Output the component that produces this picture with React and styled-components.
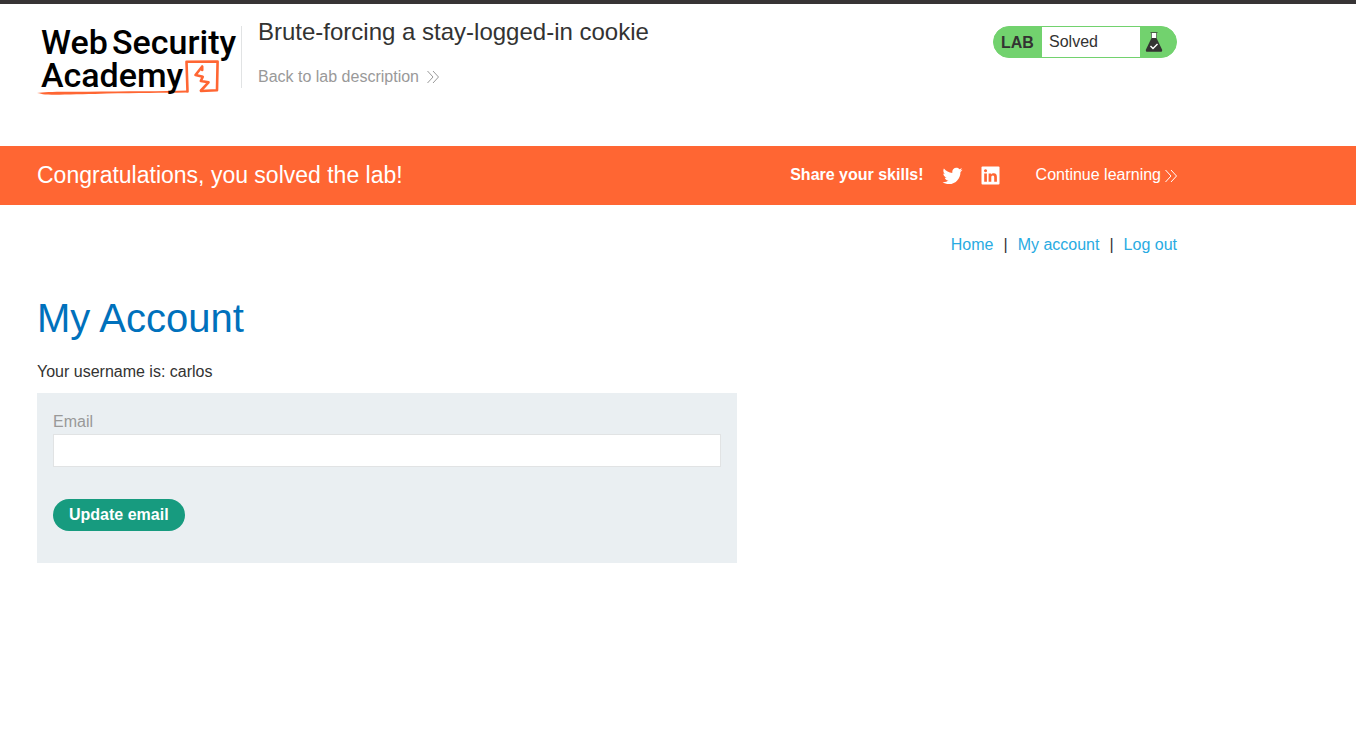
import React from "react";
import styled, { createGlobalStyle } from "styled-components";

const GlobalStyle = createGlobalStyle`
  *, *::before, *::after { box-sizing: border-box; }
  body {
    margin: 0;
    background: #fff;
    color: #333332;
    font-family: "Liberation Sans", Arial, sans-serif;
    font-size: 16px;
    line-height: 24px;
  }
  a { color: inherit; text-decoration: none; }
`;

const Page = styled.div`
  border-top: 4px solid #373435;
`;

const Container = styled.div`
  max-width: 1177px;
  padding-left: 37px;
`;

const HeaderRow = styled(Container)`
  display: flex;
  align-items: flex-start;
  min-height: 142px;
  padding-top: 22px;
`;

const LogoLink = styled.a`
  display: block;
  flex: none;
  width: 204px;
  height: 72px;
`;

const LogoSvg = styled.svg`
  display: block;
  overflow: visible;
  font-family: Roboto, sans-serif;
  font-weight: 500;
  font-size: 34px;
`;

const TitleBlock = styled.div`
  flex: 1;
  height: 62px;
  padding-left: 16px;
  border-left: 1px solid #e1e3e4;
`;

const LabTitle = styled.h2`
  margin: -6px 0 21px;
  font-size: 24px;
  font-weight: 400;
  line-height: 24px;
`;

const ChevronLink = styled.a`
  display: inline-flex;
  align-items: center;
  gap: ${(p) => p.$gap}px;
  color: ${(p) => p.$color};
`;

const Status = styled.div`
  display: flex;
  align-items: center;
  flex: none;
  width: 184px;
  height: 32px;
  overflow: hidden;
  border: 1px solid #72d26e;
  border-radius: 16px;
  background: #72d26e;
`;

const StatusTag = styled.span`
  width: 48px;
  padding: 2px 0 0 7px;
  font-weight: 700;
`;

const StatusText = styled.span`
  flex: 1;
  height: 30px;
  padding-left: 7px;
  background: #fff;
  line-height: 30px;
`;

const FlaskBox = styled.span`
  display: flex;
  align-items: center;
  width: 36px;
  padding-left: 5px;
`;

const Banner = styled.section`
  background: #ff6633;
  color: #fff;
`;

const BannerRow = styled(Container)`
  display: flex;
  align-items: center;
  min-height: 59px;
`;

const BannerTitle = styled.h4`
  flex: 1;
  margin: 0;
  padding-bottom: 2px;
  font-size: 23px;
  font-weight: 400;
`;

const BannerText = styled.span`
  padding-bottom: 2px;
`;

const Share = styled.div`
  display: flex;
  align-items: center;
  gap: 18px;
  margin-right: 36px;
  font-weight: 700;
`;

const IconLink = styled.a`
  display: flex;
`;

const Nav = styled.nav`
  display: flex;
  justify-content: flex-end;
  gap: 10px;
  padding-top: 28px;
`;

const NavLink = styled.a`
  color: #29abe2;
`;

const Heading = styled.h1`
  margin: 37px 0 18px;
  color: #0071bc;
  font-size: 40px;
  font-weight: 400;
  line-height: 48px;
`;

const Username = styled.p`
  margin: 0 0 9px;
`;

const Form = styled.form`
  max-width: 700px;
  padding: 17px 16px 32px;
  background: #eaeff2;
`;

const Label = styled.label`
  display: block;
  color: #999;
`;

const Input = styled.input`
  display: block;
  width: 100%;
  height: 33px;
  padding: 0 8px;
  border: 1px solid #e1e3e4;
  border-radius: 0;
  background: #fff;
  color: inherit;
  font: inherit;
`;

const Button = styled.button`
  display: block;
  height: 32px;
  margin-top: 32px;
  padding: 0 16px;
  border: 0;
  border-radius: 16px;
  background: #179b7f;
  color: #fff;
  font-family: inherit;
  font-size: 16px;
  font-weight: 700;
`;

function Logo() {
  return (
    <LogoSvg width="204" height="72" viewBox="0 0 204 72" role="img" aria-label="Web Security Academy">
      <text x="4" y="28">Web</text>
      <text x="75" y="28">Security</text>
      <path
        d="M0 67 C8 65.5 25 65.6 50 65.8 C90 65.2 125 65.8 151 64.6 L150 66.6 C125 67 100 67 70 67.6 C48 68.4 22 69 8 68.4 C5 68.2 3 67.4 0 67Z"
        fill="#ff6633"
      />
      <g fill="none" stroke="#ff6633" strokeLinejoin="round" strokeLinecap="round">
        <path strokeWidth="2.6" d="M150.500 65.500 L149.500 35.800 L180.600 35.600 L180 64.200 L164 65" />
        <path strokeWidth="2.6" d="M164 64.500 L171.500 56.300 L163.800 55 L165.800 50.800 L158.500 49 L165.200 40.500 V44" />
      </g>
      <text x="4" y="61">Academy</text>
    </LogoSvg>
  );
}

function Chevrons() {
  return (
    <svg width="12" height="14" viewBox="0 0 12 14" fill="none" stroke="currentColor" aria-hidden="true">
      <path d="M0.500 1 L6 7 L0.500 13 M6 1 L11.500 7 L6 13" />
    </svg>
  );
}

function Flask() {
  return (
    <svg width="18" height="20" viewBox="0 0 18 20" aria-hidden="true">
      <path d="M6.500 1 H11.500 V6.500 H6.500Z" fill="#fff" />
      <path d="M5.500 0.500 H12.500" stroke="#333332" strokeOpacity="0.7" />
      <path
        d="M6.500 6 H11.500 L17 17.500 C17.500 19 17 19.800 15.600 19.800 H2.400 C1 19.800 0.500 19 1 17.500Z"
        fill="#333332"
      />
      <path d="M6.500 1 V6 M11.500 1 V6" stroke="#333332" strokeOpacity="0.6" />
      <path d="M5.500 14 L8 16.500 L12.500 12" fill="none" stroke="#fff" strokeWidth="1.400" />
    </svg>
  );
}

function Twitter() {
  return (
    <svg width="21" height="21" viewBox="1 1 22 22" fill="currentColor" aria-hidden="true">
      <path d="M22.460 6c-.770.350-1.600.580-2.460.690.880-.530 1.560-1.370 1.880-2.380-.830.500-1.750.850-2.720 1.050C18.370 4.500 17.260 4 16 4c-2.350 0-4.270 1.920-4.270 4.290 0 .340.040.670.110.980C8.280 9.090 5.110 7.380 3 4.790c-.370.630-.580 1.370-.580 2.150 0 1.490.750 2.810 1.910 3.560-.710 0-1.370-.200-1.950-.500v.030c0 2.080 1.480 3.820 3.440 4.210a4.220 4.220 0 0 1-1.930.070 4.280 4.280 0 0 0 4 2.980 8.521 8.521 0 0 1-5.330 1.840c-.340 0-.680-.020-1.020-.060C3.440 20.290 5.700 21 8.120 21 16 21 20.330 14.460 20.330 8.790c0-.190 0-.370-.010-.560.840-.600 1.560-1.360 2.140-2.230z" />
    </svg>
  );
}

function LinkedIn() {
  return (
    <svg width="19" height="19" viewBox="0 0 19 19" aria-hidden="true">
      <rect x="0.500" y="0.500" width="18" height="18" rx="1" fill="#fff" />
      <path
        d="M3.200 7.400 H5.900 V15.800 H3.200Z M4.550 3.200 A1.550 1.550 0 1 1 4.540 3.200Z M7.600 7.400 H10.200 V8.600 C10.700 7.700 11.600 7.200 12.800 7.200 C15.100 7.200 15.900 8.600 15.900 11 V15.800 H13.200 V11.500 C13.200 10.300 13 9.500 11.900 9.500 C10.700 9.500 10.300 10.300 10.300 11.500 V15.800 H7.600Z"
        fill="#ff6633"
      />
    </svg>
  );
}

export default function App() {
  return (
    <Page>
      <GlobalStyle />
      <header>
        <HeaderRow>
          <LogoLink href="#">
            <Logo />
          </LogoLink>
          <TitleBlock>
            <LabTitle>Brute-forcing a stay-logged-in cookie</LabTitle>
            <ChevronLink href="#" $gap={8} $color="#999">
              Back to lab description
              <Chevrons />
            </ChevronLink>
          </TitleBlock>
          <Status>
            <StatusTag>LAB</StatusTag>
            <StatusText>Solved</StatusText>
            <FlaskBox>
              <Flask />
            </FlaskBox>
          </Status>
        </HeaderRow>
      </header>
      <Banner>
        <BannerRow>
          <BannerTitle>Congratulations, you solved the lab!</BannerTitle>
          <Share>
            <BannerText>Share your skills!</BannerText>
            <IconLink href="#" aria-label="Share on Twitter">
              <Twitter />
            </IconLink>
            <IconLink href="#" aria-label="Share on LinkedIn">
              <LinkedIn />
            </IconLink>
          </Share>
          <ChevronLink href="#" $gap={4} $color="#fff">
            <BannerText>Continue learning</BannerText>
            <Chevrons />
          </ChevronLink>
        </BannerRow>
      </Banner>
      <Container as="main">
        <Nav>
          <NavLink href="#">Home</NavLink>
          <span>|</span>
          <NavLink href="#">My account</NavLink>
          <span>|</span>
          <NavLink href="#">Log out</NavLink>
        </Nav>
        <Heading>My Account</Heading>
        <Username>Your username is: carlos</Username>
        <Form onSubmit={(e) => e.preventDefault()}>
          <Label htmlFor="email">Email</Label>
          <Input id="email" type="email" name="email" />
          <Button type="submit">Update email</Button>
        </Form>
      </Container>
    </Page>
  );
}
